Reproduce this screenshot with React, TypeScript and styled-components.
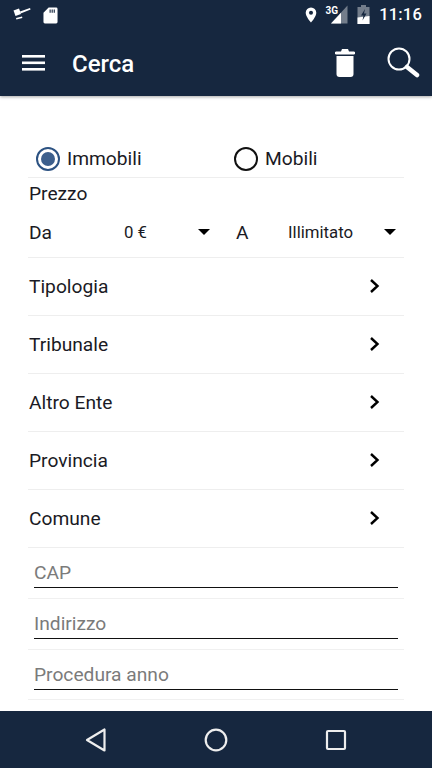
import { createGlobalStyle } from "styled-components";
import styled from "styled-components";

const NAVY = "#16273f";

const GlobalStyle = createGlobalStyle`
  html, body {
    margin: 0;
    padding: 0;
    background: #fff;
    font-family: Roboto, "Liberation Sans", sans-serif;
  }
  * { box-sizing: border-box; }
`;

const Screen = styled.div`
  width: 432px;
  height: 768px;
  display: flex;
  flex-direction: column;
  overflow: hidden;
  background: #fff;
`;

const Top = styled.header`
  height: 96px;
  background: ${NAVY};
  box-shadow: 0 1px 3px rgba(0, 0, 0, 0.35);
  color: #fff;
  display: flex;
  flex-direction: column;
  z-index: 1;
`;

const StatusBar = styled.div`
  height: 29px;
  display: flex;
  align-items: center;
  padding: 0 10px 0 13px;
`;

const StatusSpacer = styled.div`
  flex: 1;
`;

const Clock = styled.span`
  font-size: 16.5px;
  font-weight: 500;
  letter-spacing: 0.2px;
  margin-left: 9px;
`;

const AppBar = styled.div`
  flex: 1;
  display: flex;
  align-items: center;
  padding: 0 12px 0 22px;
`;

const Title = styled.h1`
  margin: 2px 0 0 26px;
  font-size: 24px;
  font-weight: 500;
  flex: 1;
`;

const Icon = styled.svg<{ $left?: number; $lift?: number }>`
  flex: none;
  margin-left: ${(p) => p.$left ?? 0}px;
  margin-bottom: ${(p) => p.$lift ?? 0}px;
`;

const Form = styled.main`
  flex: 1;
  padding: 44px 28px 0;
  display: flex;
  flex-direction: column;
`;

const Row = styled.div<{ $h: number }>`
  height: ${(p) => p.$h}px;
  border-bottom: 1px solid #eeeeee;
  display: flex;
  align-items: center;
  font-size: 19.2px;
  color: #1a1a24;
`;

const RadioRow = styled(Row)`
  padding-left: 8px;
`;

const RadioOption = styled.label<{ $w: number }>`
  width: ${(p) => p.$w}px;
  display: flex;
  align-items: center;
  gap: 7px;
`;

const RadioDot = styled.span<{ $on?: boolean }>`
  width: 24px;
  height: 24px;
  border-radius: 50%;
  border: 2px solid ${(p) => (p.$on ? "#2c5282" : "#111")};
  display: flex;
  align-items: center;
  justify-content: center;
  &::after {
    content: "";
    width: 14px;
    height: 14px;
    border-radius: 50%;
    background: ${(p) => (p.$on ? "#3d5f8c" : "transparent")};
  }
`;

const PriceBlock = styled.div`
  height: 80px;
  border-bottom: 1px solid #eeeeee;
  display: flex;
  flex-direction: column;
  font-size: 19.2px;
  color: #1a1a24;
  padding-left: 1px;
`;

const PriceLabel = styled.div`
  height: 30px;
  display: flex;
  align-items: center;
`;

const PriceRow = styled.div`
  height: 48px;
  display: flex;
  align-items: center;
`;

const PriceName = styled.span<{ $w: number }>`
  width: ${(p) => p.$w}px;
`;

const Spinner = styled.div<{ $w: number; $end: number }>`
  width: ${(p) => p.$w}px;
  display: flex;
  align-items: center;
  justify-content: space-between;
  font-size: 16.8px;
  padding-right: ${(p) => p.$end}px;
`;

const Caret = styled.span`
  width: 0;
  height: 0;
  border-left: 6.5px solid transparent;
  border-right: 6.5px solid transparent;
  border-top: 6.5px solid #000;
`;

const NavRow = styled(Row)`
  justify-content: space-between;
  padding: 0 23px 0 1px;
`;

const Field = styled.div`
  width: 100%;
  height: 34px;
  margin-bottom: 10px;
  border-bottom: 1.5px solid #111;
  font-size: 19.2px;
  color: #7b7b7b;
  display: flex;
  align-items: flex-end;
  padding-bottom: 3px;
`;

const InputRow = styled.div`
  height: 51px;
  border-bottom: 1px solid #f0f0f0;
  padding: 0 6px;
  display: flex;
  align-items: flex-end;
  &:last-child {
    height: 50px;
  }
  &:last-child ${Field} {
    margin-bottom: 9px;
  }
`;

const BottomNav = styled.nav`
  height: 57px;
  background: ${NAVY};
  display: flex;
  align-items: center;
  justify-content: center;
  gap: 97px;
`;

const Chevron = () => (
  <Icon width="12" height="16" viewBox="0 0 12 16" $lift={2}>
    <path d="M2 2l6.5 6L2 14" fill="none" stroke="#000" strokeWidth="2.4" />
  </Icon>
);

const Hammer = () => (
  <Icon width="18" height="13" viewBox="0 0 18 13" fill="#fff" $lift={2}>
    <path d="M.5 3.5L6 1.5 8 7l-5.5 2z" />
    <path d="M7 4.5l10-3.5.6 1.5L7.6 6.5z" />
    <path d="M3 11l6-1.5.4 1.5-6 1.5z" />
  </Icon>
);

const SdCard = () => (
  <Icon width="15" height="18" viewBox="0 0 16 18" $left={12}>
    <path d="M6 1h8a1.5 1.5 0 0 1 1.5 1.5v14A1.5 1.5 0 0 1 14 18H2a1.5 1.5 0 0 1-1.5-1.5V6.5z" fill="#fff" />
    <path d="M7 3h1.2v3.5H7zM9.2 3h1.2v3.5H9.2zM11.4 3h1.2v3.5h-1.2z" fill={NAVY} />
  </Icon>
);

const Pin = () => (
  <Icon width="12" height="16" viewBox="0 0 14 19">
    <path d="M7 0.5a6.3 6.3 0 0 0-6.3 6.3C.7 11.5 7 18.5 7 18.5s6.3-7 6.3-11.7A6.3 6.3 0 0 0 7 .5z" fill="#fff" />
    <circle cx="7" cy="6.8" r="2.4" fill={NAVY} />
  </Icon>
);

const Signal = () => (
  <Icon width="24" height="22" viewBox="0 0 24 22" $left={7}>
    <path d="M23.5 1.5V19.5H7z" fill="#fff" opacity="0.4" />
    <path d="M17 8.7V19.5H7z" fill="#fff" />
    <text x="1.5" y="9.5" fontSize="10" fontWeight="700" fill="#fff" fontFamily="Roboto, sans-serif">3G</text>
  </Icon>
);

const Battery = () => (
  <Icon width="13" height="19" viewBox="0 0 13 19" $left={9}>
    <path d="M4 0h5v2h3.5v17H.5V2H4z" fill="#fff" opacity="0.4" />
    <path d="M.5 12.5l12-1.5v8H.5z" fill="#fff" />
    <path d="M8 4L4 10.5h2.5l-1 5 4-7H7z" fill={NAVY} />
  </Icon>
);

const Menu = () => (
  <Icon width="24" height="18" viewBox="0 0 24 18" fill="#fff">
    <rect x="0" y="1" width="23" height="2.6" />
    <rect x="0" y="7.5" width="23" height="2.6" />
    <rect x="0" y="14" width="23" height="2.6" />
  </Icon>
);

const Trash = () => (
  <Icon width="20" height="29" viewBox="0 0 20 29" fill="#fff">
    <path d="M7 1h6l1 2.5h4.8a1.2 1.2 0 0 1 0 3H1.2a1.2 1.2 0 0 1 0-3H6z" />
    <path d="M1.5 8h17v18a3 3 0 0 1-3 3h-11a3 3 0 0 1-3-3z" />
  </Icon>
);

const Search = () => (
  <Icon width="33" height="31" viewBox="0 0 33 31" $left={32}>
    <circle cx="12" cy="12" r="10.5" fill="none" stroke="#fff" strokeWidth="2" />
    <path d="M20 20l10 8" stroke="#fff" strokeWidth="4.5" strokeLinecap="round" />
  </Icon>
);

const Back = () => (
  <Icon width="22" height="26" viewBox="0 0 22 26">
    <path d="M19.5 2.5v21L2 13z" fill="none" stroke="#eee" strokeWidth="2.2" strokeLinejoin="round" />
  </Icon>
);

const Home = () => (
  <Icon width="24" height="24" viewBox="0 0 24 24">
    <circle cx="12" cy="12" r="10.3" fill="none" stroke="#eee" strokeWidth="2.2" />
  </Icon>
);

const Recent = () => (
  <Icon width="22" height="22" viewBox="0 0 22 22">
    <rect x="2" y="2" width="18" height="18" rx="1" fill="none" stroke="#eee" strokeWidth="2.2" />
  </Icon>
);

const links = ["Tipologia", "Tribunale", "Altro Ente", "Provincia", "Comune"];
const fields = ["CAP", "Indirizzo", "Procedura anno"];

export default function App() {
  return (
    <Screen>
      <GlobalStyle />
      <Top>
        <StatusBar>
          <Hammer />
          <SdCard />
          <StatusSpacer />
          <Pin />
          <Signal />
          <Battery />
          <Clock>11:16</Clock>
        </StatusBar>
        <AppBar>
          <Menu />
          <Title>Cerca</Title>
          <Trash />
          <Search />
        </AppBar>
      </Top>
      <Form>
        <RadioRow $h={38}>
          <RadioOption $w={198}>
            <RadioDot $on />
            Immobili
          </RadioOption>
          <RadioOption $w={120}>
            <RadioDot />
            Mobili
          </RadioOption>
        </RadioRow>
        <PriceBlock>
          <PriceLabel>Prezzo</PriceLabel>
          <PriceRow>
            <PriceName $w={95}>Da</PriceName>
            <Spinner $w={112} $end={26}>
              0 €
              <Caret />
            </Spinner>
            <PriceName $w={52}>A</PriceName>
            <Spinner $w={108} $end={0}>
              Illimitato
              <Caret />
            </Spinner>
          </PriceRow>
        </PriceBlock>
        {links.map((l) => (
          <NavRow $h={58} key={l}>
            {l}
            <Chevron />
          </NavRow>
        ))}
        {fields.map((f) => (
          <InputRow key={f}>
            <Field>{f}</Field>
          </InputRow>
        ))}
      </Form>
      <BottomNav>
        <Back />
        <Home />
        <Recent />
      </BottomNav>
    </Screen>
  );
}
